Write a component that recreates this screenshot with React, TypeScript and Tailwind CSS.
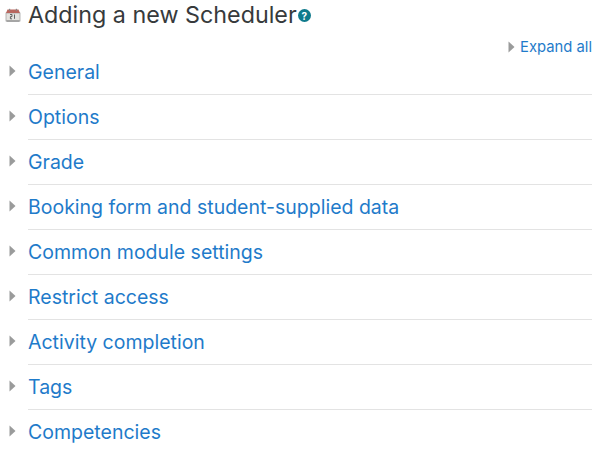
const sections = [
  'General',
  'Options',
  'Grade',
  'Booking form and student-supplied data',
  'Common module settings',
  'Restrict access',
  'Activity completion',
  'Tags',
  'Competencies',
];

function Caret({ className }: { className: string }) {
  return (
    <svg viewBox="0 0 7 12" className={className}>
      <path d="M0.5 0.5 L6.5 6 L0.5 11.5 Z" fill="#9a9b9b" />
    </svg>
  );
}

function CalendarIcon() {
  return (
    <svg viewBox="0 0 16 14" className="h-[14px] w-4 shrink-0">
      <rect x="1" y="5" width="14" height="8" fill="#e4e2de" stroke="#a5a5a5" strokeWidth="0.8" />
      <path d="M2.5 1.5 H13.5 L15 5 H1 Z" fill="#b9675f" />
      <rect x="1.5" y="12.4" width="13" height="1.3" fill="#8f8f8f" />
      <rect x="4" y="0.8" width="1.2" height="2" fill="#888" />
      <rect x="10.8" y="0.8" width="1.2" height="2" fill="#888" />
      <path d="M5 6.5 H7 V8.6 H5.4 V10.8 H7 M9.5 6.5 V10.8" fill="none" stroke="#555" strokeWidth="0.9" />
    </svg>
  );
}

function HelpIcon() {
  return (
    <span className="mt-[1px] ml-[1px] flex h-[13px] w-[13px] shrink-0 items-center justify-center rounded-full bg-[#0f7a8c] text-[10px] leading-none font-bold text-white">
      ?
    </span>
  );
}

export default function App() {
  return (
    <div className="h-[451px] w-[600px] overflow-hidden bg-white pr-2 font-['Inter',sans-serif]">
      <div className="flex items-center pt-[1px] pl-[5px]">
        <CalendarIcon />
        <h2 className="ml-[7px] text-[23.3px] leading-[28px] font-normal text-[#373a3c]">Adding a new Scheduler</h2>
        <HelpIcon />
      </div>
      <div className="mt-[9px] flex items-center justify-end gap-[5px] text-[14.8px] leading-[18px] text-[#1f7bca]">
        <Caret className="h-[12px] w-[7px]" />
        <span>Expand all</span>
      </div>
      <div className="-mt-[6px]">
        {sections.map((s, i) => (
          <div key={s} className="flex pl-[9px]">
            <Caret className="mt-[15px] h-[12px] w-[7px] shrink-0" />
            <div className={`ml-[12px] h-[45px] flex-1 pt-[9px] text-[19.5px] leading-[26px] text-[#1f7bca] ${i < sections.length - 1 ? 'border-b border-[#e3e3e3]' : ''}`}>
              {s}
            </div>
          </div>
        ))}
      </div>
    </div>
  );
}
